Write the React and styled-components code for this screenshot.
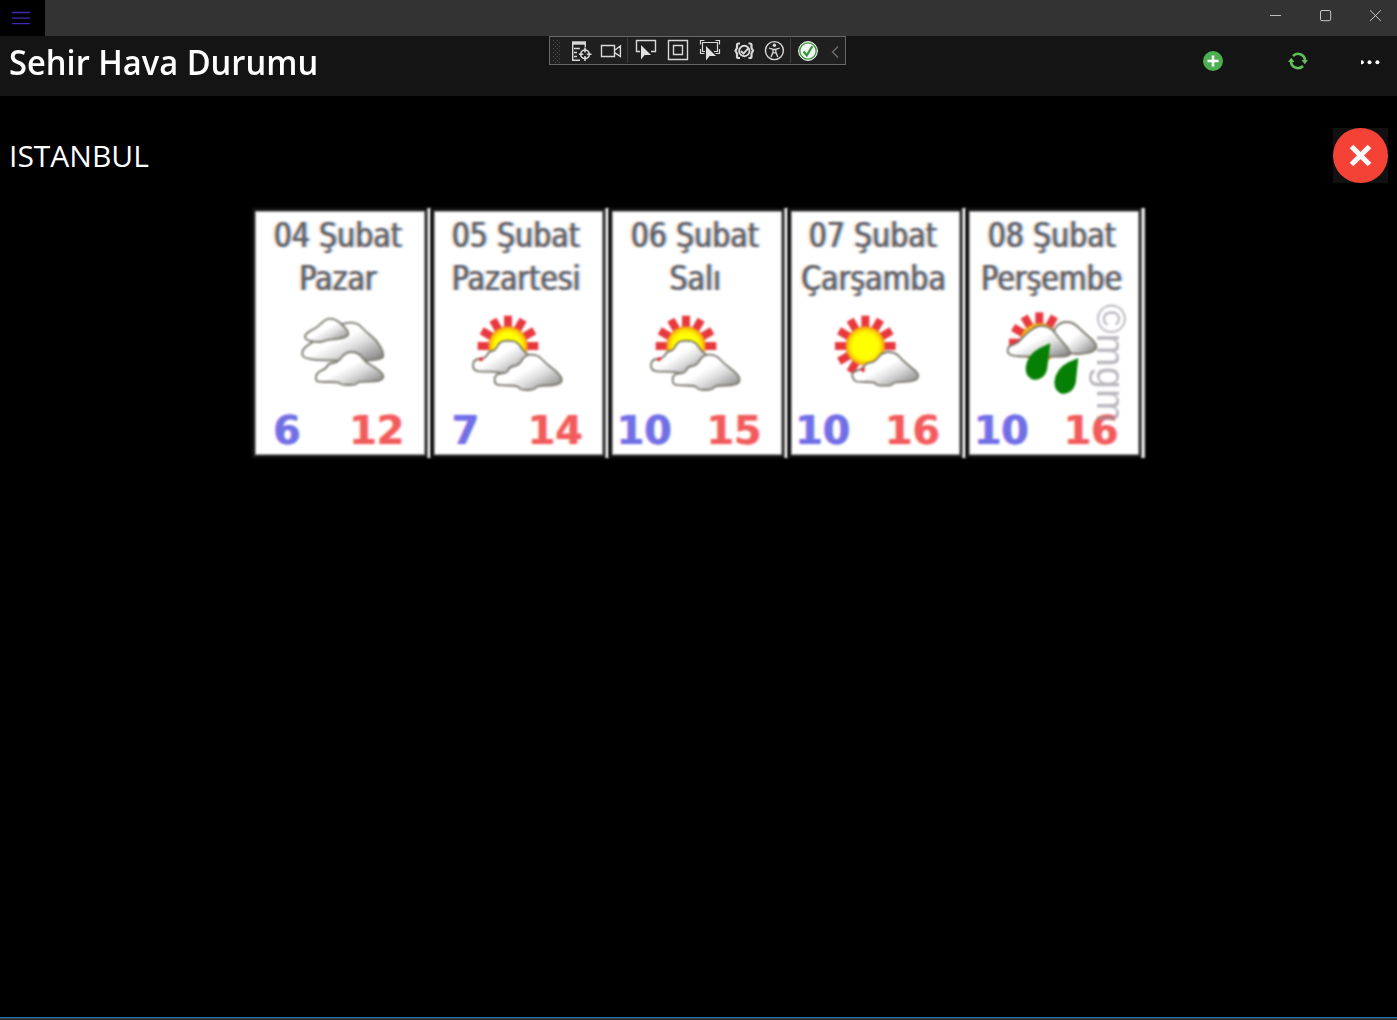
import React from 'react';
import styled, { createGlobalStyle } from 'styled-components';

const GlobalStyle = createGlobalStyle`
  * { box-sizing: border-box; }
  body { margin: 0; background: #000; overflow: hidden; }
`;

const Window = styled.div`
  position: relative;
  display: flex;
  flex-direction: column;
  height: 1020px;
  background: #000;
  color: #fff;
  font-family: 'Open Sans', 'Noto Sans', sans-serif;
  svg { display: block; flex: none; }
`;

const TitleBar = styled.div`
  display: flex;
  justify-content: space-between;
  height: 36px;
  background: #333;
`;

const MenuButton = styled.div`
  width: 45px;
  height: 36px;
  background: #000;
`;

const WindowControls = styled.div`
  display: flex;
  padding-right: 5px;
`;

const WindowControl = styled.div`
  display: flex;
  justify-content: center;
  width: 32px;
  margin-left: 18px;
`;

const Header = styled.header`
  display: flex;
  align-items: flex-start;
  justify-content: space-between;
  height: 60px;
  background: #141414;
`;

const Title = styled.h1`
  margin: 0;
  padding-left: 9px;
  font: 600 34px/52px 'Open Sans', sans-serif;
  white-space: nowrap;
  transform: scaleX(0.961);
  transform-origin: 9px 0;
`;

const Actions = styled.div`
  display: flex;
  gap: 41px;
  padding: 3px 16px 0 0;
`;

const DebugBar = styled.div`
  position: absolute;
  left: 549px;
  top: 36px;
  display: flex;
  align-items: center;
  width: 297px;
  height: 29px;
  border: 1px solid #686868;
  background: #1f1f1f;
`;

const Separator = styled.div`
  width: 1px;
  height: 25px;
  margin: 0 ${(p) => p.$after}px 0 ${(p) => p.$before}px;
  background: #3d3d3d;
`;

const CityRow = styled.div`
  display: flex;
  align-items: center;
  justify-content: space-between;
  margin-top: 32px;
  height: 55px;
  padding: 0 9px;
`;

const CityName = styled.div`
  font: 400 30px/55px 'Open Sans', sans-serif;
`;

const DeleteButton = styled.div`
  width: 55px;
  height: 55px;
  background: #111;
`;

const Forecast = styled.div`
  display: flex;
  width: 893px;
  height: 250px;
  margin: 25px 0 0 252px;
`;

const Day = styled.div`
  display: flex;
  width: 178.6px;
  filter: blur(0.85px);
`;

const Edge = styled.div`
  flex: none;
  width: 4px;
  background: linear-gradient(90deg, #888, #ddd 35%, #fff 75%, #aaa);
`;

const Card = styled.div`
  position: relative;
  display: flex;
  flex-direction: column;
  flex: none;
  width: 174.6px;
  height: 250px;
  border: solid #141414;
  border-width: 3px 2px 3px 3.6px;
  background: #fff;
  box-shadow: inset 0 0 0 1px #aaa;
`;

const DayLine = styled.div`
  height: 43px;
  width: 165px;
  font: 400 33.5px/50px 'DejaVu Sans Condensed', 'DejaVu Sans', sans-serif;
  font-stretch: condensed;
  color: #5c5c66;
  text-align: center;
  white-space: nowrap;
  text-shadow: -2px 0 1px rgba(255, 155, 60, 0.6), 2px 0 1px rgba(50, 155, 255, 0.6);
  span { display: inline-block; transform: scaleX(0.945); }
`;

const WeatherIcon = styled.svg`
  width: 100px;
  height: 90px;
  margin: 13px 0 0 37px;
`;

const Temps = styled.div`
  display: flex;
  gap: 25px;
`;

const Temp = styled.span`
  width: 64.5px;
  font: 700 39.5px/60px 'DejaVu Sans', sans-serif;
  text-align: center;
  color: ${(p) => (p.$high ? '#f25b5e' : '#7070e6')};
  text-shadow: -1px 0 1px ${(p) => (p.$high ? '#ffc080' : '#e080e0')},
    1px 0 1px ${(p) => (p.$high ? '#ffb0e0' : '#a0d8ff')};
`;

const Watermark = styled.div`
  position: absolute;
  right: 5px;
  top: 93px;
  writing-mode: vertical-rl;
  text-orientation: sideways;
  font: 400 40px/46px 'Liberation Sans', sans-serif;
  color: rgba(150, 145, 155, 0.65);
`;

const Footer = styled.div`
  margin-top: auto;
  height: 3px;
  background: #222;
  border-top: 1px solid #1673b8;
  box-shadow: inset 0 1px #444;
`;

const Gradients = () => (
  <defs>
    <linearGradient id="cloud" x1="0.15" y1="0.1" x2="1" y2="0.9">
      <stop offset="0.4" stopColor="#fff" />
      <stop offset="0.62" stopColor="#dcdcdc" />
      <stop offset="1" stopColor="#858585" />
    </linearGradient>
    <radialGradient id="sun">
      <stop offset="0.65" stopColor="#ffff00" />
      <stop offset="0.85" stopColor="#ffd000" />
      <stop offset="1" stopColor="#f08a20" />
    </radialGradient>
  </defs>
);

// Rounds a closed outline by running curves through the midpoints of its sides.
const smooth = (outline) => {
  const pts = outline.split(' ').map((p) => p.split(',').map(Number));
  const mid = (a, b) => `${(a[0] + b[0]) / 2} ${(a[1] + b[1]) / 2}`;
  const curves = pts.map((p, i) => `Q${p[0]} ${p[1]} ${mid(p, pts[(i + 1) % pts.length])}`);
  return `M${mid(pts[pts.length - 1], pts[0])} ${curves.join(' ')} Z`;
};

const Cloud = ({ outline }) => (
  <path d={smooth(outline)} fill="url(#cloud)" stroke="#7b776c" strokeWidth="5.5" strokeLinejoin="round" />
);

const Sun = ({ x, y, from = 0, to = 12 }) => (
  <g>
    {Array.from({ length: to - from }, (_, i) => {
      const a = ((i + from) * Math.PI) / 6;
      const c = Math.cos(a);
      const s = Math.sin(a);
      return (
        <line key={i} x1={x + 45 * c} y1={y + 45 * s} x2={x + 91 * c} y2={y + 91 * s} stroke="#e8383e" strokeWidth="24" />
      );
    })}
    <circle cx={x} cy={y} r="59" fill="url(#sun)" />
  </g>
);

const Cloudy = () => (
  <WeatherIcon viewBox="130 330 300 270">
    <Gradients />
    <Cloud outline="262,385 286,368 326,368 350,394 384,420 406,460 400,480 300,482 166,480 157,452 190,426" />
    <Cloud outline="168,420 170,400 204,384 232,356 258,356 286,378 304,404 280,416 232,420 214,428" />
    <Cloud outline="200,542 204,518 232,506 240,490 268,488 290,456 328,456 352,488 380,502 408,526 396,545 326,545 324,555 276,555 272,546 214,546" />
  </WeatherIcon>
);

const PartlyCloudy = () => (
  <WeatherIcon viewBox="132 330 300 270">
    <Gradients />
    <Sun x={243} y={438} from={6} to={13} />
    <Cloud outline="138,516 138,478 174,476 186,454 204,452 218,426 242,421 272,426 290,456 316,470 284,502 240,524 202,514" />
    <Cloud outline="202,550 204,522 240,520 248,500 276,496 294,464 332,464 356,490 384,510 408,536 396,556 328,557 324,570 278,570 274,557 216,556" />
    <circle cx="162" cy="478" r="6" fill="#f0202c" />
  </WeatherIcon>
);

const MostlySunny = () => (
  <WeatherIcon viewBox="147 330 300 270">
    <Gradients />
    <Sun x={259} y={438} from={4} to={13} />
    <Cloud outline="224,540 216,518 252,506 260,490 288,486 310,456 348,456 372,482 396,502 422,524 410,545 342,546 340,557 292,557 288,546 234,546" />
    <circle cx="252" cy="510" r="6" fill="#f0202c" />
  </WeatherIcon>
);

const Showers = () => (
  <WeatherIcon viewBox="143 330 300 270">
    <Gradients />
    <Sun x={243} y={428} from={6} to={11} />
    <Cloud outline="280,395 306,366 344,366 374,396 402,418 418,440 400,460 320,464" />
    <Cloud outline="148,469 148,438 176,432 200,404 226,383 250,376 278,384 302,414 332,448 340,470 240,470" />
    <path fill="#058005" d="M276 430 L266 510 Q258 538 230 540 Q202 536 202 504 Q206 464 244 444 Z" />
    <path fill="#058005" d="M360 474 L352 550 Q344 580 314 582 Q288 576 288 546 Q292 506 330 487 Z" />
  </WeatherIcon>
);

const days = [
  { date: '04 Şubat', name: 'Pazar', Icon: Cloudy, low: 6, high: 12 },
  { date: '05 Şubat', name: 'Pazartesi', Icon: PartlyCloudy, low: 7, high: 14 },
  { date: '06 Şubat', name: 'Salı', Icon: PartlyCloudy, low: 10, high: 15 },
  { date: '07 Şubat', name: 'Çarşamba', Icon: MostlySunny, low: 10, high: 16 },
  { date: '08 Şubat', name: 'Perşembe', Icon: Showers, low: 10, high: 16, mark: '©mgm' },
];

const ToolIcon = ({ x, w, children }) => (
  <svg width={w} height="25" viewBox={`${x} 38 ${w} 25`} fill="none" stroke="#d8d8d8" strokeWidth="1.4">
    {children}
  </svg>
);

const Pointer = ({ x, y }) => <path d={`M${x} ${y} v14.5 l3.6 -4.4 h6.4 Z`} fill="#e0e0e0" stroke="none" />;

const DebugTools = () => (
  <DebugBar>
    <ToolIcon x={550} w={16}>
      {[40, 44, 48, 52, 56, 60].map((y) => (
        <path key={y} stroke="#5a5a5a" strokeWidth="1" d={`M553 ${y + 0.5} h1 m3 0 h1 M555 ${y + 2.5} h1 m3 0 h1`} />
      ))}
    </ToolIcon>
    <ToolIcon x={566} w={30}>
      <path d="M572 43 H586" strokeWidth="3.4" />
      <path d="M572.7 42 V60.3 H580 M585.3 42 V47 M574 48.5 h6 M574 52.5 h3 M574 56.5 h3" />
      <circle cx="585" cy="54.3" r="4.3" strokeWidth="1.6" />
      <path d="M585 47.5 v5 M585 56 v5 M578.8 54.3 h4.5 M586.7 54.3 h4.8" strokeWidth="1.6" />
    </ToolIcon>
    <ToolIcon x={596} w={30}>
      <path d="M601.5 45.5 H614.5 V56.5 H601.5 Z M615 50 L620.4 46 V56.5 L615 52.8" />
    </ToolIcon>
    <Separator $before={1} $after={2} />
    <ToolIcon x={630} w={32}>
      <path d="M640 51.5 H636.5 V40.5 H655.5 V51.5 H651" />
      <Pointer x={641} y={45} />
    </ToolIcon>
    <ToolIcon x={662} w={32}>
      <path d="M668.5 40.5 H687.5 V59.5 H668.5 Z M673.5 45.5 H682.5 V54.5 H673.5 Z" />
    </ToolIcon>
    <ToolIcon x={694} w={34}>
      <path d="M700.5 44.5 V40.5 H704.5 M715.5 40.5 H719.5 V44.5 M700.5 49 V53.5 H704.5 M715.5 53.5 H719.5 V49 M705 51.5 H702.5 V42.5 H717.5 V51.5 H714" strokeWidth="1.2" />
      <Pointer x={706} y={46} />
    </ToolIcon>
    <ToolIcon x={728} w={32}>
      <path d="M740 43.5 H738.5 Q737 43.5 737 45 V48 L735.5 50.8 L737 53.5 V56.5 Q737 58 738.5 58 H740 M748.5 43.5 H750 Q751.5 43.5 751.5 45 V48 L753 50.8 L751.5 53.5 V56.5 Q751.5 58 750 58 H748.5" strokeWidth="2.2" />
      <circle cx="744.3" cy="51" r="5.2" strokeWidth="1.9" />
      <path d="M741 51 l2.5 2.7 l5 -5.5" strokeWidth="1.9" />
    </ToolIcon>
    <ToolIcon x={760} w={30}>
      <circle cx="774.4" cy="50.6" r="9" />
      <circle cx="774.4" cy="45.3" r="1.7" fill="#d8d8d8" stroke="none" />
      <path d="M769 48 L773 49.3 V52 L771 57 M779.8 48 L775.8 49.3 V52 L777.8 57 M773 49.5 H775.8 M773 52.8 H775.8" strokeWidth="1.3" />
    </ToolIcon>
    <Separator $before={0} $after={2} />
    <ToolIcon x={793} w={31}>
      <circle cx="808" cy="51" r="9.4" fill="#f4f4f4" stroke="#f4f4f4" strokeWidth="1" />
      <circle cx="808" cy="51" r="8.2" stroke="#35963a" strokeWidth="1.3" />
      <path d="M803.5 51.5 l3.3 3.8 l5.5 -9" stroke="#35963a" strokeWidth="2.2" />
    </ToolIcon>
    <ToolIcon x={824} w={21}>
      <path d="M838 46.5 L832.5 52 L838 57.5" stroke="#707070" strokeWidth="1.3" />
    </ToolIcon>
  </DebugBar>
);

export default function App() {
  return (
    <Window>
      <GlobalStyle />
      <TitleBar>
        <MenuButton>
          <svg width="45" height="36" stroke="#4527b5" strokeWidth="1.3">
            <path d="M12 12.5 H30 M12 18.2 H30 M12 23.7 H30" />
          </svg>
        </MenuButton>
        <WindowControls>
          <WindowControl>
            <svg width="32" height="32" stroke="#bdbdbd"><path d="M10 15.5 H21" /></svg>
          </WindowControl>
          <WindowControl>
            <svg width="32" height="32" stroke="#c8c8c8" fill="none"><rect x="10.5" y="10.5" width="10.2" height="10.2" rx="1.5" /></svg>
          </WindowControl>
          <WindowControl>
            <svg width="32" height="32" stroke="#c8c8c8"><path d="M10 10.2 L20.9 21 M20.9 10.2 L10 21" /></svg>
          </WindowControl>
        </WindowControls>
      </TitleBar>
      <Header>
        <Title>Sehir Hava Durumu</Title>
        <Actions>
          <svg width="44" height="44" viewBox="1191 39 44 44">
            <circle cx="1213" cy="61" r="10" fill="#4caf50" />
            <path d="M1207.5 61 h11 M1213 55.5 v11" stroke="#fff" strokeWidth="2.6" />
          </svg>
          <svg width="44" height="44" viewBox="1276 39 44 44">
            <path d="M1291 61 A7 7 0 0 0 1303 66 M1305 60 A7 7 0 0 0 1293 56" fill="none" stroke="#61bf57" strokeWidth="2.6" />
            <path d="M1288 62 L1291.2 57.8 L1294.5 62 Z M1301.5 60 L1308 60 L1304.8 64.3 Z" fill="#61bf57" />
          </svg>
          <svg width="20" height="44" viewBox="1361 39 20 44" fill="#fff">
            <circle cx="1361.8" cy="62.3" r="2" />
            <circle cx="1369.5" cy="62.3" r="2" />
            <circle cx="1377.4" cy="62.3" r="2" />
          </svg>
        </Actions>
      </Header>
      <DebugTools />
      <CityRow>
        <CityName>ISTANBUL</CityName>
        <DeleteButton>
          <svg width="55" height="55">
            <circle cx="27.5" cy="27.5" r="27.5" fill="#f44336" />
            <path d="M18.5 18.5 L36.5 36.5 M36.5 18.5 L18.5 36.5" stroke="#fafafa" strokeWidth="5.2" />
          </svg>
        </DeleteButton>
      </CityRow>
      <Forecast>
        {days.map(({ date, name, Icon, low, high, mark }) => (
          <Day key={date}>
            <Card>
              <DayLine><span>{date}</span></DayLine>
              <DayLine><span>{name}</span></DayLine>
              <Icon />
              <Temps>
                <Temp>{low}</Temp>
                <Temp $high>{high}</Temp>
              </Temps>
              {mark && <Watermark>{mark}</Watermark>}
            </Card>
            <Edge />
          </Day>
        ))}
      </Forecast>
      <Footer />
    </Window>
  );
}
